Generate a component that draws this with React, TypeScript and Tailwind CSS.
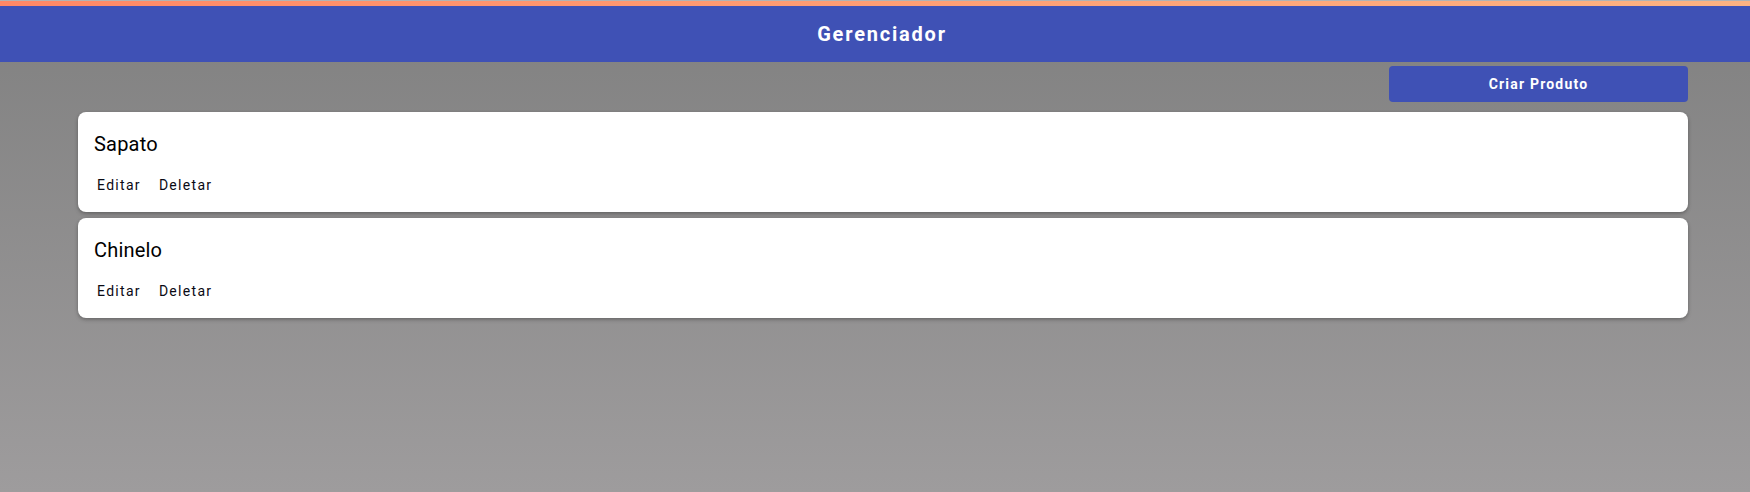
import React from "react";

type Product = { id: number; name: string };

const products: Product[] = [
	{ id: 1, name: "Sapato" },
	{ id: 2, name: "Chinelo" },
];

function ProductCard({ product }: { product: Product }) {
	return (
		<div className="rounded-lg bg-white px-4 pt-4 pb-[15px] shadow-[0_2px_4px_rgba(0,0,0,0.2),0_1px_3px_rgba(0,0,0,0.12)]">
			<div className="text-[20px] leading-8 tracking-[0.2px] text-black">{product.name}</div>
			<div className="mt-[13px] ml-[3px] flex gap-[18px] text-[14px] leading-6 font-normal tracking-[1.3px] text-[#0a0a14]">
				<button type="button">Editar</button>
				<button type="button">Deletar</button>
			</div>
		</div>
	);
}

export default function App() {
	return (
		<div
			className="flex min-h-screen flex-col bg-gradient-to-b from-[#808080] to-[#9e9c9d]"
			style={{ fontFamily: "Roboto, 'Liberation Sans', sans-serif" }}
		>
			{/* top accent stripe */}
			<div className="h-px bg-[#b3b3b3]" />
			<div className="h-[5px] bg-gradient-to-r from-[#ff8866] to-[#fdb382]" />
			<header className="flex h-14 items-center justify-center bg-[#3f51b5] pl-[14px]">
				<h1 className="text-[20px] font-bold tracking-[1.8px] text-white">
					Gerenciador
				</h1>
			</header>

			<main className="mr-[62px] ml-[78px] flex flex-col">
				<div className="mt-1 flex justify-end">
					<button
						type="button"
						className="h-9 w-[299px] rounded bg-[#3f51b5] text-[14px] font-bold tracking-[1.2px] text-white"
					>
						Criar Produto
					</button>
				</div>
				<div className="mt-[10px] flex flex-col gap-[6px]">
					{products.map((p) => (
						<ProductCard key={p.id} product={p} />
					))}
				</div>
			</main>
		</div>
	);
}
